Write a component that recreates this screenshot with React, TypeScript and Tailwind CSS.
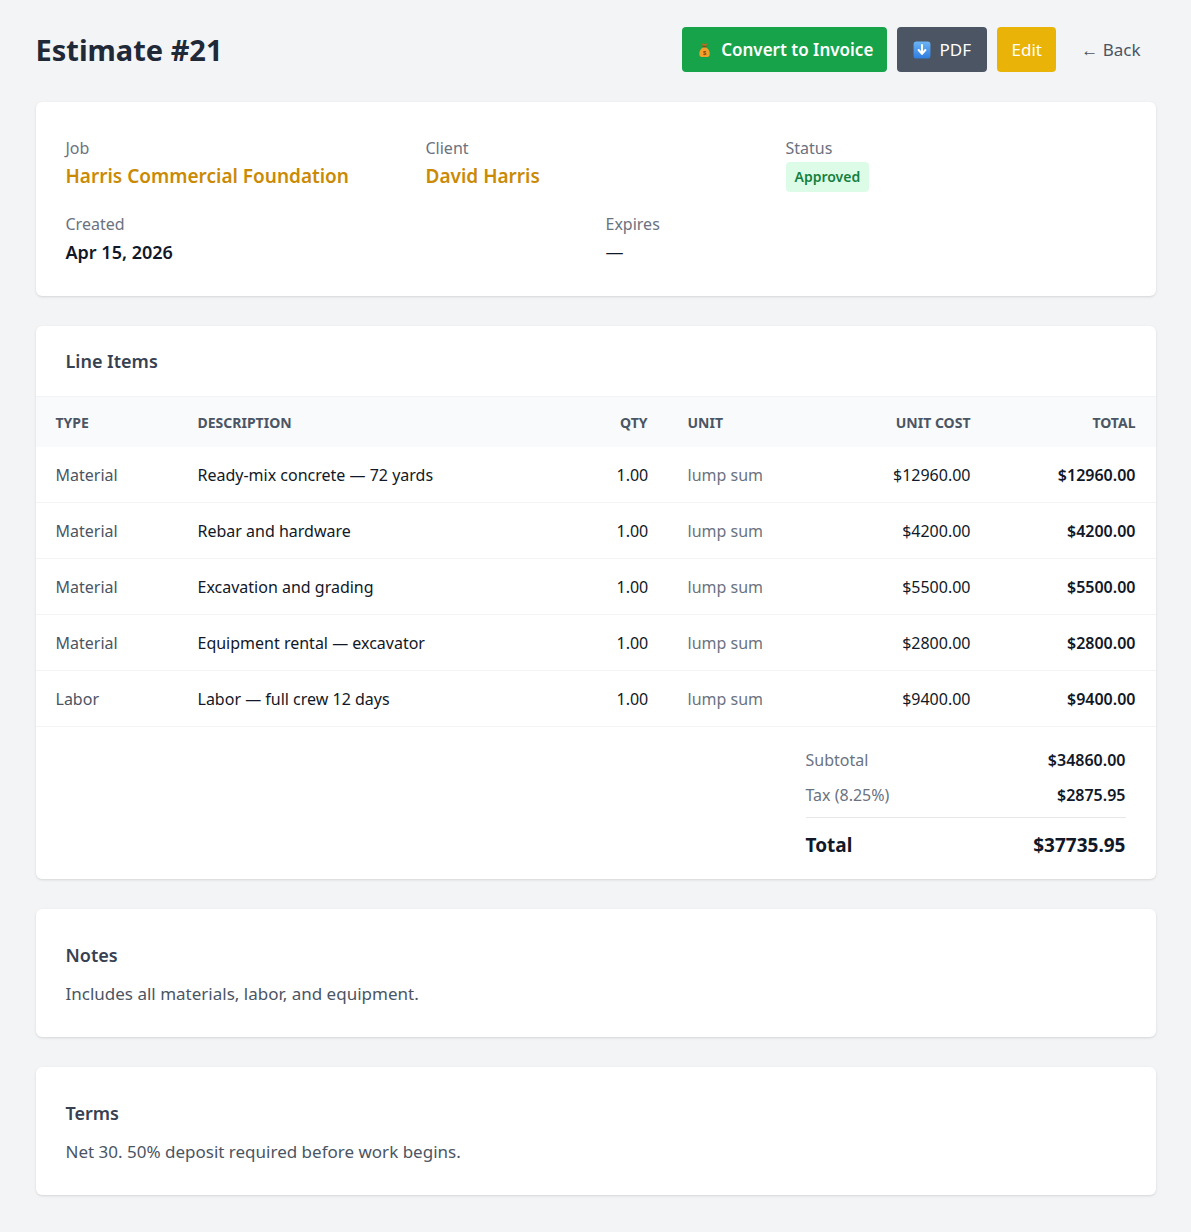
const items = [
  { type: 'Material', desc: 'Ready-mix concrete — 72 yards', qty: '1.00', unit: 'lump sum', cost: '$12960.00', total: '$12960.00' },
  { type: 'Material', desc: 'Rebar and hardware', qty: '1.00', unit: 'lump sum', cost: '$4200.00', total: '$4200.00' },
  { type: 'Material', desc: 'Excavation and grading', qty: '1.00', unit: 'lump sum', cost: '$5500.00', total: '$5500.00' },
  { type: 'Material', desc: 'Equipment rental — excavator', qty: '1.00', unit: 'lump sum', cost: '$2800.00', total: '$2800.00' },
  { type: 'Labor', desc: 'Labor — full crew 12 days', qty: '1.00', unit: 'lump sum', cost: '$9400.00', total: '$9400.00' },
]

const rowGrid = 'grid grid-cols-[142px_419px_71px_171px_152px_165px] items-center'

function MoneyBag() {
  return (
    <svg width="17" height="17" viewBox="0 0 32 32">
      <path d="M11 4 Q16 7 21 4 L19 10 H13 Z" fill="#c2691c" />
      <rect x="12" y="9" width="8" height="3" rx="1.5" fill="#8a4a14" />
      <path d="M13 12 C5 16 4 29 10 30 H22 C28 29 27 16 19 12 Z" fill="#f59e2b" />
      <text x="16" y="26" textAnchor="middle" fontSize="11" fontWeight="700" fill="#7c3e0b" fontFamily="Liberation Sans, sans-serif">$</text>
    </svg>
  )
}

function DownBox() {
  return (
    <svg width="18" height="18" viewBox="0 0 32 32">
      <defs>
        <linearGradient id="bx" x1="0" y1="0" x2="0" y2="1">
          <stop offset="0" stopColor="#6cb4f5" />
          <stop offset="1" stopColor="#2f7ee0" />
        </linearGradient>
      </defs>
      <rect x="1" y="1" width="30" height="30" rx="5" fill="url(#bx)" />
      <path d="M16 7 V22 M10 16 L16 23 L22 16" stroke="#fff" strokeWidth="3.6" fill="none" strokeLinecap="round" strokeLinejoin="round" />
    </svg>
  )
}

export default function App() {
  return (
    <div className="min-h-screen bg-[#f3f4f6] pt-[27px] pb-8 font-['Noto_Sans',sans-serif]">
      <div className="mx-auto w-[1120px]">
        {/* Header */}
        <div className="flex items-center justify-between mb-[30px]">
          <h1 className="text-[29px] font-bold text-[#1f2937] leading-none">Estimate #21</h1>
          <div className="flex items-center gap-[10px]">
            <button className="h-[45px] w-[205px] rounded bg-[#16a34a] text-white text-[17px] font-semibold flex items-center justify-center gap-2">
              <MoneyBag />
              Convert to Invoice
            </button>
            <button className="h-[45px] w-[90px] rounded bg-[#4b5563] text-white text-[17px] flex items-center justify-center gap-2">
              <DownBox />
              PDF
            </button>
            <button className="h-[45px] w-[59px] rounded bg-[#eab308] text-white text-[17px] flex items-center justify-center">
              Edit
            </button>
            <button className="h-[45px] px-[15px] text-[17px] text-[#4b5563]">← Back</button>
          </div>
        </div>

        {/* Summary */}
        <div className="bg-white rounded-md shadow-sm p-[30px] pt-[34px] pb-[30px]">
          <div className="grid grid-cols-3 gap-5">
            <div>
              <div className="text-[16px] leading-6 text-[#6b7280]">Job</div>
              <div className="text-[19px] leading-7 font-semibold text-[#ca8a04] mt-[2px]">Harris Commercial Foundation</div>
            </div>
            <div>
              <div className="text-[16px] leading-6 text-[#6b7280]">Client</div>
              <div className="text-[19px] leading-7 font-semibold text-[#ca8a04] mt-[2px]">David Harris</div>
            </div>
            <div>
              <div className="text-[16px] leading-6 text-[#6b7280]">Status</div>
              <span className="inline-block mt-[2px] rounded bg-[#dcfce7] text-[#15803d] text-[14px] font-semibold px-[9px] leading-[30px]">Approved</span>
            </div>
          </div>
          <div className="grid grid-cols-2 gap-5 mt-[20px]">
            <div>
              <div className="text-[16px] leading-6 text-[#6b7280]">Created</div>
              <div className="text-[18px] leading-7 font-semibold text-[#111827] mt-[2px]">Apr 15, 2026</div>
            </div>
            <div>
              <div className="text-[16px] leading-6 text-[#6b7280]">Expires</div>
              <div className="text-[18px] leading-7 text-[#111827] mt-[2px]">—</div>
            </div>
          </div>
        </div>

        {/* Line items */}
        <div className="bg-white rounded-md shadow-sm mt-[30px] overflow-hidden">
          <div className="h-[70px] px-[30px] flex items-center text-[18px] font-semibold text-[#374151]">Line Items</div>
          <div className={`${rowGrid} h-[51px] bg-[#f9fafb] border-t border-[#f3f4f6] text-[14px] font-bold uppercase text-[#4b5563]`}>
            <div className="px-5">Type</div>
            <div className="px-5">Description</div>
            <div className="px-5 text-right">Qty</div>
            <div className="px-5">Unit</div>
            <div className="px-5 text-right">Unit Cost</div>
            <div className="px-5 text-right">Total</div>
          </div>
          {items.map((it, i) => (
            <div key={i} className={`${rowGrid} h-[56px] border-b border-[#f3f4f6] text-[16px]`}>
              <div className="px-5 text-[#4b5563]">{it.type}</div>
              <div className="px-5 text-[#111827]">{it.desc}</div>
              <div className="px-5 text-right text-[#111827]">{it.qty}</div>
              <div className="px-5 text-[#6b7280]">{it.unit}</div>
              <div className="px-5 text-right text-[#111827]">{it.cost}</div>
              <div className="px-5 text-right font-semibold text-[#111827]">{it.total}</div>
            </div>
          ))}
          <div className="flex justify-end px-[30px] pt-[21px] pb-[20px]">
            <div className="w-[320px]">
              <div className="flex justify-between text-[16px] leading-6">
                <span className="text-[#6b7280]">Subtotal</span>
                <span className="font-semibold text-[#111827]">$34860.00</span>
              </div>
              <div className="flex justify-between text-[16px] leading-6 mt-[11px]">
                <span className="text-[#6b7280]">Tax (8.25%)</span>
                <span className="font-semibold text-[#111827]">$2875.95</span>
              </div>
              <div className="border-t border-[#e5e7eb] mt-[10px] pt-[13px] flex justify-between text-[19px] leading-7 font-bold text-[#111827]">
                <span>Total</span>
                <span>$37735.95</span>
              </div>
            </div>
          </div>
        </div>

        {/* Notes */}
        <div className="bg-white rounded-md shadow-sm mt-[30px] px-[30px] pt-[32px] pb-[30px]">
          <div className="text-[18px] leading-7 font-semibold text-[#374151]">Notes</div>
          <div className="text-[17px] leading-[26px] text-[#4b5563] mt-[12px]">Includes all materials, labor, and equipment.</div>
        </div>

        {/* Terms */}
        <div className="bg-white rounded-md shadow-sm mt-[30px] px-[30px] pt-[32px] pb-[30px]">
          <div className="text-[18px] leading-7 font-semibold text-[#374151]">Terms</div>
          <div className="text-[17px] leading-[26px] text-[#4b5563] mt-[12px]">Net 30. 50% deposit required before work begins.</div>
        </div>
      </div>
    </div>
  )
}
